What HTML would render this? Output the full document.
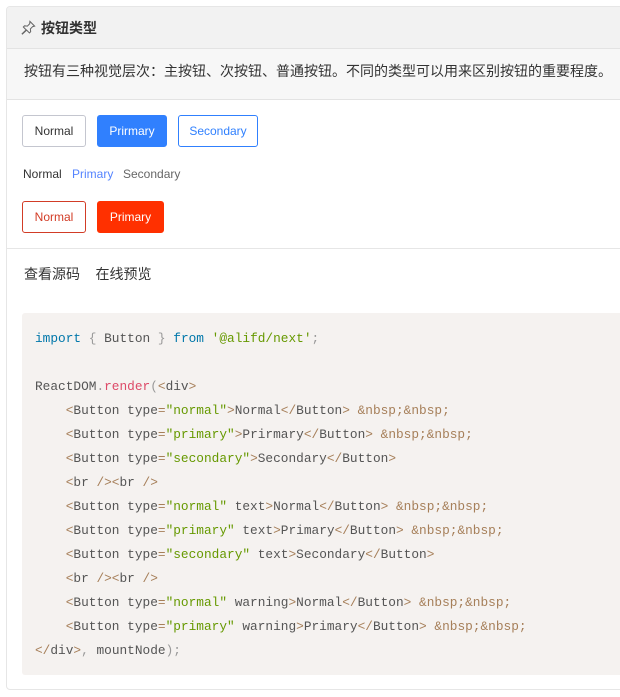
<!DOCTYPE html>
<html><head><meta charset="utf-8"><style>
*{box-sizing:border-box;margin:0;padding:0}
body{width:620px;height:697px;background:#fff;font-family:"Liberation Sans","Noto Sans CJK SC",sans-serif;overflow:hidden;position:relative}
.card{position:absolute;left:6px;top:6px;width:640px;height:684px;border:1px solid #e6e6e6;border-radius:4px;overflow:hidden}
.hd{height:42px;background:#f2f2f2;border-bottom:1px solid #e3e3e3;display:flex;align-items:center;padding-left:14px;font-size:14px;font-weight:bold;color:#333}
.hd svg{margin-right:5px}
.desc{height:51px;background:#f7f7f7;border-bottom:1px solid #e3e3e3;padding:12px 0 0 17px;font-size:14px;color:#333}
.btn{position:absolute;height:32px;border-radius:3px;font-size:12px;display:flex;align-items:center;justify-content:center;border:1px solid}
.t{position:absolute;font-size:12px;top:160px}
.div{position:absolute;left:0;top:241px;width:100%;border-top:1px solid #e6e6e6}
.links{position:absolute;left:17px;top:257px;font-size:14px;color:#333;word-spacing:0}
.code{position:absolute;left:15px;top:306px;width:640px;height:362px;background:#f5f2f0;border-radius:3px;padding:14px 0 0 13px;font-family:"Liberation Mono","DejaVu Sans Mono",monospace;font-size:12.8px;line-height:24px;color:#555;white-space:pre}
.k{color:#07a}.s{color:#690}.p{color:#a67f59}.f{color:#dd4a68}.g{color:#999}
</style></head><body>
<div class="card">
<div class="hd"><svg width="15" height="15" viewBox="0 0 16 16" fill="none" stroke="#666" stroke-width="1.1"><path d="M9.5 1.5l5 5-2 .5-2.5 2.5.3 3-1.3 1.3-3-3L1.5 15l-.3-.3L5.5 10.5l-3-3L3.8 6.2l3 .3L9.3 4z"/></svg>按钮类型</div>
<div class="desc">按钮有三种视觉层次：主按钮、次按钮、普通按钮。不同的类型可以用来区别按钮的重要程度。</div>
<div class="btn" style="left:15px;top:108px;width:64px;border-color:#c4c6cf;color:#333">Normal</div>
<div class="btn" style="left:90px;top:108px;width:70px;border-color:#3080fe;background:#3080fe;color:#fff">Prirmary</div>
<div class="btn" style="left:171px;top:108px;width:80px;border-color:#3080fe;color:#3080fe">Secondary</div>
<div class="t" style="left:16px;color:#333">Normal</div>
<div class="t" style="left:65px;color:#5584ff">Primary</div>
<div class="t" style="left:116px;color:#666">Secondary</div>
<div class="btn" style="left:15px;top:194px;width:64px;border-color:#d23c26;color:#d23c26">Normal</div>
<div class="btn" style="left:90px;top:194px;width:67px;border-color:#ff3000;background:#ff3000;color:#fff">Primary</div>
<div class="div"></div>
<div class="links">查看源码&nbsp;&nbsp;&nbsp;&nbsp;在线预览</div>
<div class="code"><span class="k">import</span> <span class="g">{</span> Button <span class="g">}</span> <span class="k">from</span> <span class="s">'@alifd/next'</span><span class="g">;</span>

ReactDOM<span class="g">.</span><span class="f">render</span><span class="g">(</span><span class="p">&lt;</span>div<span class="p">&gt;</span>
    <span class="p">&lt;</span>Button type<span class="p">=</span><span class="s">"normal"</span><span class="p">&gt;</span>Normal<span class="p">&lt;/</span>Button<span class="p">&gt;</span> <span class="p">&amp;nbsp;&amp;nbsp;</span>
    <span class="p">&lt;</span>Button type<span class="p">=</span><span class="s">"primary"</span><span class="p">&gt;</span>Prirmary<span class="p">&lt;/</span>Button<span class="p">&gt;</span> <span class="p">&amp;nbsp;&amp;nbsp;</span>
    <span class="p">&lt;</span>Button type<span class="p">=</span><span class="s">"secondary"</span><span class="p">&gt;</span>Secondary<span class="p">&lt;/</span>Button<span class="p">&gt;</span>
    <span class="p">&lt;</span>br <span class="p">/&gt;&lt;</span>br <span class="p">/&gt;</span>
    <span class="p">&lt;</span>Button type<span class="p">=</span><span class="s">"normal"</span> text<span class="p">&gt;</span>Normal<span class="p">&lt;/</span>Button<span class="p">&gt;</span> <span class="p">&amp;nbsp;&amp;nbsp;</span>
    <span class="p">&lt;</span>Button type<span class="p">=</span><span class="s">"primary"</span> text<span class="p">&gt;</span>Primary<span class="p">&lt;/</span>Button<span class="p">&gt;</span> <span class="p">&amp;nbsp;&amp;nbsp;</span>
    <span class="p">&lt;</span>Button type<span class="p">=</span><span class="s">"secondary"</span> text<span class="p">&gt;</span>Secondary<span class="p">&lt;/</span>Button<span class="p">&gt;</span>
    <span class="p">&lt;</span>br <span class="p">/&gt;&lt;</span>br <span class="p">/&gt;</span>
    <span class="p">&lt;</span>Button type<span class="p">=</span><span class="s">"normal"</span> warning<span class="p">&gt;</span>Normal<span class="p">&lt;/</span>Button<span class="p">&gt;</span> <span class="p">&amp;nbsp;&amp;nbsp;</span>
    <span class="p">&lt;</span>Button type<span class="p">=</span><span class="s">"primary"</span> warning<span class="p">&gt;</span>Primary<span class="p">&lt;/</span>Button<span class="p">&gt;</span> <span class="p">&amp;nbsp;&amp;nbsp;</span>
<span class="p">&lt;/</span>div<span class="p">&gt;</span><span class="g">,</span> mountNode<span class="g">);</span></div>
</div>
</body></html>
